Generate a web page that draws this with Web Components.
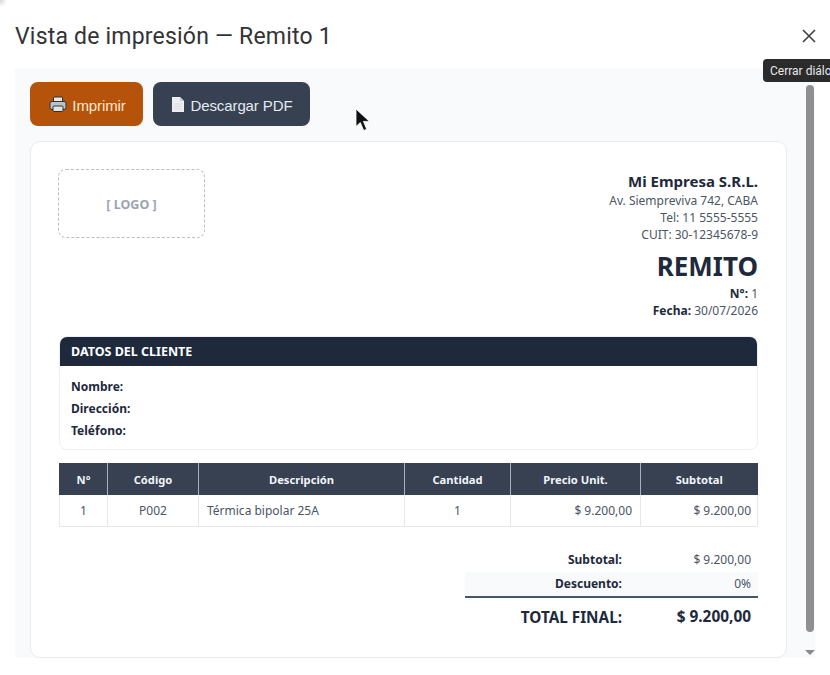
<!DOCTYPE html>
<html lang="es">
<head>
<meta charset="utf-8">
<title>Vista de impresión</title>
<style>
  html, body { margin: 0; height: 100%; background: #fff; overflow: hidden; }
</style>
</head>
<body>
<print-dialog></print-dialog>

<script>
class PrintDialog extends HTMLElement {
  connectedCallback() {
    this.attachShadow({ mode: 'open' });
    this.shadowRoot.innerHTML = `
      <style>
        :host {
          display: flex;
          flex-direction: column;
          position: relative;
          width: 830px;
          height: 675px;
          overflow: hidden;
          background: radial-gradient(circle at 0 0, #d4d4d4, #fff 7px);
        }
        header {
          display: flex;
          align-items: center;
          justify-content: space-between;
          height: 68px;
          padding: 3px 9px 0 15px;
          box-sizing: border-box;
          flex: none;
        }
        h1 {
          margin: 1px 0 0;
          font: 400 23px Roboto, "Open Sans", sans-serif;
          letter-spacing: .2px;
          color: #333335;
        }
        .close { width: 24px; height: 24px; color: #444; }
        .panel {
          display: flex;
          height: 590px;
          margin: 0 15px;
          background: #f8fafc;
        }
        .scroll-area {
          flex: 1;
          padding: 14px 18px 0 15px;
          min-width: 0;
        }
        .tip {
          position: absolute;
          left: 763px;
          top: 59px;
          height: 23px;
          padding: 0 7px;
          background: #2b2b2b;
          color: #e8e8e8;
          border-radius: 4px;
          font: 12px/25px Roboto, sans-serif;
          white-space: nowrap;
        }
        .cursor { position: absolute; left: 355px; top: 108px; }
      </style>
      <header>
        <h1>Vista de impresión — Remito 1</h1>
        <svg class="close" viewBox="0 0 24 24"><path d="M6 6l12 12M18 6L6 18" fill="none" stroke="currentColor" stroke-width="1.7"/></svg>
      </header>
      <div class="panel">
        <div class="scroll-area">
          <print-toolbar></print-toolbar>
          <remito-doc></remito-doc>
        </div>
        <fake-scrollbar></fake-scrollbar>
      </div>
      <div class="tip">Cerrar diálogo</div>
      <svg class="cursor" width="17" height="25" viewBox="0 0 17 25"><path d="M1 1v17.5l4.3-4 3.4 8 3-1.3-3.3-7.8h6z" fill="#111" stroke="#fff" stroke-width=".8"/></svg>
    `;
  }
}

class PrintToolbar extends HTMLElement {
  connectedCallback() {
    this.attachShadow({ mode: 'open' });
    this.shadowRoot.innerHTML = `
      <style>
        :host { display: flex; gap: 10px; height: 44px; margin-bottom: 15px; }
        button {
          display: flex;
          align-items: center;
          justify-content: center;
          gap: 5px;
          height: 44px;
          padding: 2px 0 0;
          border: 0;
          border-radius: 8px;
          font: 15px "Liberation Sans", Arial, sans-serif;
          letter-spacing: -.1px;
        }
        svg { margin-top: -2px; }
        .print { width: 113px; padding-left: 2px; background: #b45309; color: #fde9d2; }
        .pdf { width: 157px; padding-left: 1px; background: #374151; color: #e5e9f0; }
      </style>
      <button class="print">
        <svg width="18" height="17" viewBox="0 0 18 17">
          <rect x="4.5" y="1" width="9" height="6" rx="1" fill="#e8e8e8" stroke="#333"/>
          <rect x="1" y="5.5" width="16" height="8" rx="2" fill="#b9c3c6" stroke="#333"/>
          <rect x="4" y="10" width="10" height="5.5" rx="1" fill="#dfe3e4" stroke="#333"/>
        </svg>
        Imprimir
      </button>
      <button class="pdf">
        <svg width="14" height="17" viewBox="0 0 14 17">
          <path d="M1 1h8l4 4v11H1z" fill="#eceef0"/>
          <path d="M9 1v4h4" fill="#c9ced3"/>
          <path d="M3 8h8M3 10.5h8M3 13h8" stroke="#d5d8db" stroke-width=".8"/>
        </svg>
        Descargar PDF
      </button>
    `;
  }
}

class RemitoDoc extends HTMLElement {
  connectedCallback() {
    this.attachShadow({ mode: 'open' });
    this.shadowRoot.innerHTML = `
      <style>
        :host {
          display: block;
          box-sizing: border-box;
          height: 517px;
          padding: 27px 28px 0 27px;
          background: #fff;
          border: 1px solid #e8ecf1;
          border-radius: 10px;
          font: 12px "Noto Sans", "Open Sans", sans-serif;
          color: #1e293b;
        }
        .top { display: flex; justify-content: space-between; align-items: flex-start; height: 167px; }
        .logo {
          display: flex;
          align-items: center;
          justify-content: center;
          width: 147px;
          height: 69px;
          padding-top: 1px;
          box-sizing: border-box;
          border: 1px dashed #b8bec8;
          border-radius: 8px;
          color: #9ca3af;
          font-weight: 700;
          font-size: 12.5px;
        }
        .emp { text-align: right; color: #4b5563; padding-top: 1px; }
        .emp b.name { display: block; font-size: 15px; line-height: 22px; color: #1e293b; }
        .emp div { line-height: 17px; }
        .emp .title { font-size: 26px; font-weight: 700; line-height: 32px; margin-top: 7px; margin-bottom: 3px; color: #1e293b; }
        .emp b { color: #1e293b; }
        .emp .meta { line-height: 17px; }
      </style>
      <div class="top">
        <div class="logo">[ LOGO ]</div>
        <div class="emp">
          <b class="name">Mi Empresa S.R.L.</b>
          <div>Av. Siempreviva 742, CABA</div>
          <div>Tel: 11 5555-5555</div>
          <div>CUIT: 30-12345678-9</div>
          <div class="title">REMITO</div>
          <div class="meta"><b>N°:</b> 1</div>
          <div class="meta"><b>Fecha:</b> 30/07/2026</div>
        </div>
      </div>
      <client-box></client-box>
      <items-table></items-table>
      <totals-box></totals-box>
    `;
  }
}

class ClientBox extends HTMLElement {
  connectedCallback() {
    this.attachShadow({ mode: 'open' });
    this.shadowRoot.innerHTML = `
      <style>
        :host {
          display: block;
          box-sizing: border-box;
          height: 114px;
          margin-left: 1px;
          margin-bottom: 12px;
          border: 1px solid #edf0f4;
          border-radius: 8px;
          overflow: hidden;
          font-size: 12px;
        }
        h2 {
          margin: 0;
          height: 29px;
          line-height: 29px;
          padding: 0 11px;
          background: #1e293b;
          color: #fff;
          font-size: 12.5px;
          font-weight: 700;
        }
        .rows { padding: 10px 11px; }
        .rows div { height: 22px; line-height: 22px; font-weight: 700; }
      </style>
      <h2>DATOS DEL CLIENTE</h2>
      <div class="rows">
        <div>Nombre:</div>
        <div>Dirección:</div>
        <div>Teléfono:</div>
      </div>
    `;
  }
}

class ItemsTable extends HTMLElement {
  connectedCallback() {
    this.attachShadow({ mode: 'open' });
    this.shadowRoot.innerHTML = `
      <style>
        :host { display: block; margin-left: 1px; margin-bottom: 21px; padding-top: 1px; }
        table {
          width: 698px;
          table-layout: fixed;
          border-collapse: collapse;
          font-size: 12px;
          color: #4b5563;
        }
        th {
          height: 32px;
          padding: 0;
          box-sizing: border-box;
          background: #374151;
          color: #f1f5f9;
          font-size: 11.2px;
          font-weight: 700;
          border-left: 1px solid #aab1bb;
        }
        th:first-child { border-left-color: #374151; }
        td {
          height: 31px;
          padding: 1px 8px 0;
          box-sizing: border-box;
          border: 1px solid #e5e7eb;
          border-top: 0;
        }
        td:last-child { padding-right: 6px; }
        .c { text-align: center; }
        .r { text-align: right; }
      </style>
      <table>
        <colgroup>
          <col style="width:48px"><col style="width:91px"><col style="width:206px">
          <col style="width:106px"><col style="width:130px"><col style="width:117px">
        </colgroup>
        <thead>
          <tr><th>N°</th><th>Código</th><th>Descripción</th><th>Cantidad</th><th>Precio Unit.</th><th>Subtotal</th></tr>
        </thead>
        <tbody>
          <tr>
            <td class="c">1</td><td class="c">P002</td><td>Térmica bipolar 25A</td>
            <td class="c">1</td><td class="r">$ 9.200,00</td><td class="r">$ 9.200,00</td>
          </tr>
        </tbody>
      </table>
    `;
  }
}

class TotalsBox extends HTMLElement {
  connectedCallback() {
    this.attachShadow({ mode: 'open' });
    this.shadowRoot.innerHTML = `
      <style>
        :host { display: block; width: 293px; margin-left: auto; font-size: 12px; }
        .row {
          display: grid;
          grid-template-columns: 157px 1fr;
          align-items: center;
          height: 24px;
          padding-right: 7px;
          color: #4b5563;
        }
        .row span:first-child { text-align: right; font-weight: 700; color: #1e293b; }
        .row span:last-child { text-align: right; }
        .alt { background: #f8fafc; border-bottom: 2px solid #475569; height: 26px; box-sizing: border-box; }
        .total { height: 38px; font-size: 15.3px; }
        .total span:last-child { font-weight: 700; font-size: 15.4px; color: #1e293b; }
      </style>
      <div class="row"><span>Subtotal:</span><span>$ 9.200,00</span></div>
      <div class="row alt"><span>Descuento:</span><span>0%</span></div>
      <div class="row total"><span>TOTAL FINAL:</span><span>$ 9.200,00</span></div>
    `;
  }
}

class FakeScrollbar extends HTMLElement {
  connectedCallback() {
    this.attachShadow({ mode: 'open' });
    this.shadowRoot.innerHTML = `
      <style>
        :host {
          display: flex;
          flex-direction: column;
          align-items: center;
          width: 10px;
          flex: none;
          padding-top: 17px;
          box-sizing: border-box;
        }
        .thumb { width: 8px; height: 547px; background: #8f8f8f; border-radius: 4px; }
        .down {
          margin-top: 18px;
          border-left: 5px solid transparent;
          border-right: 5px solid transparent;
          border-top: 5px solid #8a8a8a;
        }
      </style>
      <div class="thumb"></div>
      <div class="down"></div>
    `;
  }
}

customElements.define('print-dialog', PrintDialog);
customElements.define('print-toolbar', PrintToolbar);
customElements.define('remito-doc', RemitoDoc);
customElements.define('client-box', ClientBox);
customElements.define('items-table', ItemsTable);
customElements.define('totals-box', TotalsBox);
customElements.define('fake-scrollbar', FakeScrollbar);
</script>
</body>
</html>
